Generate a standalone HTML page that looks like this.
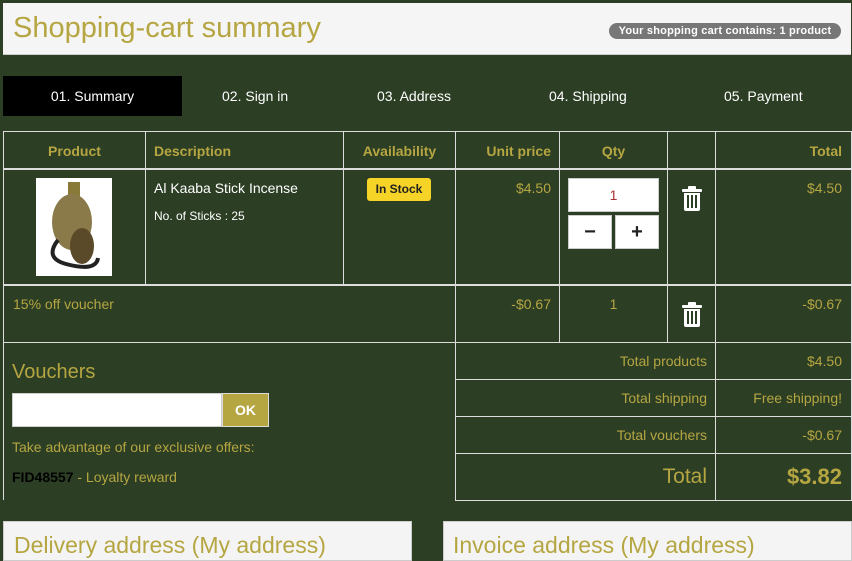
<!DOCTYPE html>
<html><head><meta charset="utf-8"><style>
*{margin:0;padding:0;box-sizing:border-box}
body{width:852px;height:556px;overflow:hidden;background:#2c3e24;font-family:"Liberation Sans",sans-serif;position:relative;color:#b5a642}
.a{position:absolute}
.l{position:absolute;background:#ddd}
.w{color:#fff}
</style></head><body>
<div class="a" style="left:3px;top:3px;width:848px;height:52px;background:#f5f5f5;border-bottom:1px solid #ccc"></div>
<div class="a" style="left:13px;top:12px;font-size:29px;color:#b5a642">Shopping-cart summary</div>
<div class="a" style="left:609px;top:23px;width:232px;height:16px;background:#777;border-radius:8px;color:#fff;font-size:11px;font-weight:bold;text-align:center;line-height:16px;letter-spacing:0.2px">Your shopping cart contains: 1 product</div>

<div class="a" style="left:3px;top:76px;width:179px;height:40px;background:#000"></div>
<div class="a w" style="left:3px;top:88px;width:179px;text-align:center;font-size:14px">01. Summary</div>
<div class="a w" style="left:222px;top:88px;font-size:14px">02. Sign in</div>
<div class="a w" style="left:377px;top:88px;font-size:14px">03. Address</div>
<div class="a w" style="left:549px;top:88px;font-size:14px">04. Shipping</div>
<div class="a w" style="left:724px;top:88px;font-size:14px">05. Payment</div>

<div class="l" style="left:3px;top:131px;width:849px;height:1px"></div>
<div class="l" style="left:3px;top:168px;width:849px;height:2px"></div>
<div class="l" style="left:3px;top:284px;width:849px;height:2px"></div>
<div class="l" style="left:3px;top:342px;width:849px;height:1px"></div>
<div class="l" style="left:455px;top:379px;width:396px;height:1px"></div>
<div class="l" style="left:455px;top:416px;width:396px;height:1px"></div>
<div class="l" style="left:455px;top:453px;width:396px;height:1px"></div>
<div class="l" style="left:455px;top:500px;width:396px;height:1px"></div>
<div class="l" style="left:3px;top:131px;width:1px;height:369px"></div>
<div class="l" style="left:145px;top:131px;width:1px;height:155px"></div>
<div class="l" style="left:343px;top:131px;width:1px;height:155px"></div>
<div class="l" style="left:455px;top:131px;width:1px;height:370px"></div>
<div class="l" style="left:559px;top:131px;width:1px;height:212px"></div>
<div class="l" style="left:667px;top:131px;width:1px;height:212px"></div>
<div class="l" style="left:715px;top:131px;width:1px;height:370px"></div>
<div class="l" style="left:851px;top:131px;width:1px;height:370px"></div>

<div class="a" style="left:4px;top:143px;width:141px;text-align:center;font-weight:bold;font-size:14px">Product</div>
<div class="a" style="left:154px;top:143px;font-weight:bold;font-size:14px">Description</div>
<div class="a" style="left:344px;top:143px;width:111px;text-align:center;font-weight:bold;font-size:14px">Availability</div>
<div class="a" style="left:456px;top:143px;width:95px;text-align:right;font-weight:bold;font-size:14px">Unit price</div>
<div class="a" style="left:560px;top:143px;width:107px;text-align:center;font-weight:bold;font-size:14px">Qty</div>
<div class="a" style="left:716px;top:143px;width:126px;text-align:right;font-weight:bold;font-size:14px">Total</div>

<div class="a" style="left:36px;top:178px;width:76px;height:98px;background:#fff">
<svg width="76" height="98"><rect x="32" y="4" width="12" height="14" fill="#8a7a3a"/><ellipse cx="36" cy="44" rx="20" ry="28" fill="#8a7a4a"/><ellipse cx="46" cy="68" rx="12" ry="18" fill="#5a4a2a"/><path d="M22 62 Q8 80 30 86 Q60 94 62 80" stroke="#222" stroke-width="4" fill="none"/></svg></div>
<div class="a w" style="left:154px;top:180px;font-size:14px">Al Kaaba Stick Incense</div>
<div class="a w" style="left:154px;top:209px;font-size:12px">No. of Sticks : 25</div>
<div class="a" style="left:367px;top:178px;width:64px;height:23px;background:#f5d327;border-radius:3px;color:#222;font-weight:bold;font-size:12px;text-align:center;line-height:23px">In Stock</div>
<div class="a" style="left:456px;top:180px;width:95px;text-align:right;font-size:14px">$4.50</div>
<div class="a" style="left:568px;top:178px;width:91px;height:34px;background:#fff;border:1px solid #ccc;color:#a33;text-align:center;line-height:32px;font-size:14px">1</div>
<div class="a" style="left:568px;top:215px;width:44px;height:34px;background:#fff;border:1px solid #ccc;color:#222;text-align:center;line-height:32px;font-size:20px;font-weight:bold">−</div>
<div class="a" style="left:615px;top:215px;width:44px;height:34px;background:#fff;border:1px solid #ccc;color:#222;text-align:center;line-height:32px;font-size:20px;font-weight:bold">+</div>
<svg class="a" style="left:681px;top:186px" width="22" height="25" viewBox="0 0 22 25"><rect x="1" y="3" width="20" height="3" rx="1" fill="#fff"/><rect x="7" y="0" width="8" height="4" rx="1" fill="#fff"/><path d="M3 7h16v16a2 2 0 0 1-2 2H5a2 2 0 0 1-2-2z" fill="#fff"/><rect x="6" y="9" width="2" height="13" fill="#2c3e24"/><rect x="10" y="9" width="2" height="13" fill="#2c3e24"/><rect x="14" y="9" width="2" height="13" fill="#2c3e24"/></svg>
<div class="a" style="left:716px;top:180px;width:126px;text-align:right;font-size:14px">$4.50</div>

<div class="a" style="left:13px;top:296px;font-size:14px">15% off voucher</div>
<div class="a" style="left:456px;top:296px;width:95px;text-align:right;font-size:14px">-$0.67</div>
<div class="a" style="left:560px;top:296px;width:107px;text-align:center;font-size:14px">1</div>
<svg class="a" style="left:681px;top:302px" width="22" height="25" viewBox="0 0 22 25"><rect x="1" y="3" width="20" height="3" rx="1" fill="#fff"/><rect x="7" y="0" width="8" height="4" rx="1" fill="#fff"/><path d="M3 7h16v16a2 2 0 0 1-2 2H5a2 2 0 0 1-2-2z" fill="#fff"/><rect x="6" y="9" width="2" height="13" fill="#2c3e24"/><rect x="10" y="9" width="2" height="13" fill="#2c3e24"/><rect x="14" y="9" width="2" height="13" fill="#2c3e24"/></svg>
<div class="a" style="left:716px;top:296px;width:126px;text-align:right;font-size:14px">-$0.67</div>

<div class="a" style="left:12px;top:361px;font-size:20px">Vouchers</div>
<div class="a" style="left:12px;top:393px;width:210px;height:34px;background:#fff;border:1px solid #ccc"></div>
<div class="a" style="left:222px;top:393px;width:47px;height:34px;background:#b5a642;border:1px solid #ddd;color:#fff;font-weight:bold;font-size:14px;text-align:center;line-height:32px">OK</div>
<div class="a" style="left:12px;top:439px;font-size:14px">Take advantage of our exclusive offers:</div>
<div class="a" style="left:12px;top:469px;font-size:14px"><b style="color:#000">FID48557</b> - Loyalty reward</div>

<div class="a" style="left:456px;top:353px;width:251px;text-align:right;font-size:14px">Total products</div>
<div class="a" style="left:716px;top:353px;width:126px;text-align:right;font-size:14px">$4.50</div>
<div class="a" style="left:456px;top:390px;width:251px;text-align:right;font-size:14px">Total shipping</div>
<div class="a" style="left:716px;top:390px;width:126px;text-align:right;font-size:14px">Free shipping!</div>
<div class="a" style="left:456px;top:427px;width:251px;text-align:right;font-size:14px">Total vouchers</div>
<div class="a" style="left:716px;top:427px;width:126px;text-align:right;font-size:14px">-$0.67</div>
<div class="a" style="left:456px;top:465px;width:251px;text-align:right;font-size:21px">Total</div>
<div class="a" style="left:716px;top:464px;width:126px;text-align:right;font-size:22px;font-weight:bold">$3.82</div>

<div class="a" style="left:3px;top:521px;width:409px;height:40px;background:#f4f4f4;border:1px solid #ccc"></div>
<div class="a" style="left:14px;top:532px;font-size:23px">Delivery address (My address)</div>
<div class="a" style="left:443px;top:521px;width:409px;height:40px;background:#f4f4f4;border:1px solid #ccc"></div>
<div class="a" style="left:453px;top:532px;font-size:23px">Invoice address (My address)</div>
</body></html>
